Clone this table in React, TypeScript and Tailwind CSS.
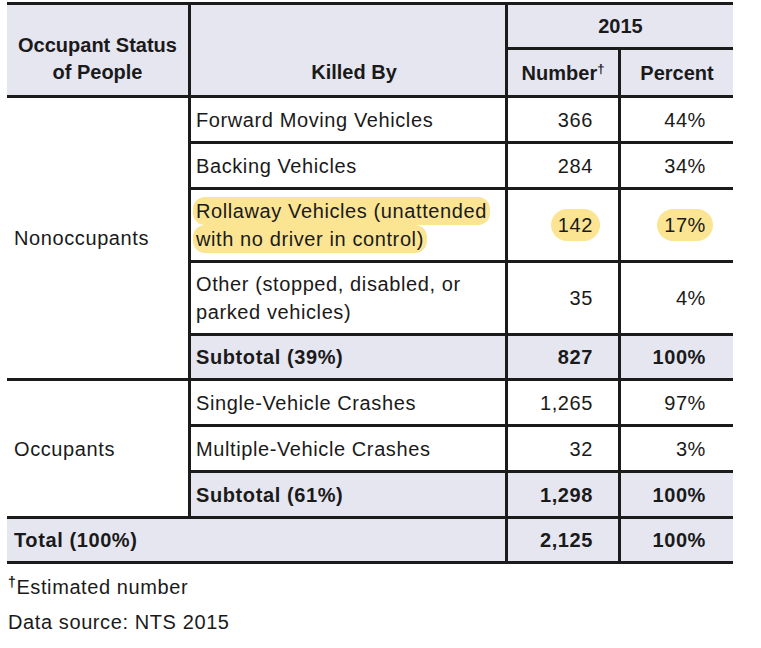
import React from "react";

type Row = {
  label: React.ReactNode;
  number: string;
  percent: string;
  h: string;
  mark?: boolean;
};

const line = "border-[#1b1b1b]";
const lav = "bg-[#e6e6f1]";

const nonoccupants: Row[] = [
  { label: "Forward Moving Vehicles", number: "366", percent: "44%", h: "h-[46px]" },
  { label: "Backing Vehicles", number: "284", percent: "34%", h: "h-[46px]" },
  {
    label: (
      <span className="-ml-[3px] rounded-[12px] bg-[#fbe593] px-[3px] py-[3px] [box-decoration-break:clone]">
        Rollaway Vehicles (unattended
        <br />
        with no driver in control)
      </span>
    ),
    number: "142",
    percent: "17%",
    h: "h-[73px]",
    mark: true,
  },
  {
    label: (
      <>
        Other (stopped, disabled, or
        <br />
        parked vehicles)
      </>
    ),
    number: "35",
    percent: "4%",
    h: "h-[73px]",
  },
];

const occupants: Row[] = [
  { label: "Single-Vehicle Crashes", number: "1,265", percent: "97%", h: "h-[46px]" },
  { label: "Multiple-Vehicle Crashes", number: "32", percent: "3%", h: "h-[46px]" },
];

function Value({ v, mark }: { v: string; mark?: boolean }) {
  return (
    <span className={`rounded-full px-[7px] py-[5px] ${mark ? "bg-[#fbe593]" : ""}`}>
      {v}
    </span>
  );
}

function DataRow({ row, first, groupLabel, span }: { row: Row; first?: boolean; groupLabel?: string; span?: number }) {
  return (
    <tr className={row.h}>
      {first && (
        <td
          rowSpan={span}
          className={`border-b-[3px] border-r-[3px] ${line} pl-[7px] align-middle`}
        >
          {groupLabel}
        </td>
      )}
      <td className={`border-b-[3px] border-r-[3px] ${line} pl-[5px] align-middle leading-[28px]`}>
        {row.label}
      </td>
      <td className={`border-b-[3px] border-r-[3px] ${line} pr-[18px] text-right align-middle`}>
        <Value v={row.number} mark={row.mark} />
      </td>
      <td className={`border-b-[3px] ${line} pr-[20px] text-right align-middle`}>
        <Value v={row.percent} mark={row.mark} />
      </td>
    </tr>
  );
}

function Subtotal({ label, number, h }: { label: string; number: string; h: string }) {
  return (
    <tr className={`${h} font-bold`}>
      <td className={`border-b-[3px] border-r-[3px] ${line} ${lav} pl-[5px] align-middle`}>{label}</td>
      <td className={`border-b-[3px] border-r-[3px] ${line} ${lav} pr-[18px] text-right align-middle`}>
        <Value v={number} />
      </td>
      <td className={`border-b-[3px] ${line} ${lav} pr-[20px] text-right align-middle`}>
        <Value v="100%" />
      </td>
    </tr>
  );
}

export default function App() {
  return (
    <div className="min-h-[648px] w-[761px] bg-white pl-[7px] pt-[2px] font-['Liberation_Sans',Arial,sans-serif] text-[20px] tracking-[0.03em] text-[#1a1a1a]">
      <table className="w-[726px] table-fixed border-separate border-spacing-0">
        <colgroup>
          <col className="w-[184px]" />
          <col className="w-[317px]" />
          <col className="w-[113px]" />
          <col className="w-[112px]" />
        </colgroup>
        <thead className="font-bold tracking-normal">
          <tr className="h-[48px]">
            <th
              rowSpan={2}
              className={`border-y-[3px] border-r-[3px] ${line} ${lav} pb-[9px] text-center align-bottom leading-[27px] font-bold`}
            >
              Occupant Status
              <br />
              of People
            </th>
            <th
              rowSpan={2}
              className={`border-y-[3px] border-r-[3px] ${line} ${lav} pb-[9px] pl-[12px] text-center align-bottom leading-[27px] font-bold`}
            >
              Killed By
            </th>
            <th colSpan={2} className={`border-y-[3px] ${line} ${lav} text-center align-middle font-bold`}>
              2015
            </th>
          </tr>
          <tr className="h-[48px]">
            <th className={`border-b-[3px] border-r-[3px] ${line} ${lav} text-center align-middle font-bold`}>
              Number<sup className="text-[13px]">†</sup>
            </th>
            <th className={`border-b-[3px] ${line} ${lav} text-center align-middle font-bold`}>Percent</th>
          </tr>
        </thead>
        <tbody>
          {nonoccupants.map((r, i) => (
            <DataRow key={i} row={r} first={i === 0} groupLabel="Nonoccupants" span={5} />
          ))}
          <Subtotal label="Subtotal (39%)" number="827" h="h-[45px]" />
          {occupants.map((r, i) => (
            <DataRow key={i} row={r} first={i === 0} groupLabel="Occupants" span={3} />
          ))}
          <Subtotal label="Subtotal (61%)" number="1,298" h="h-[46px]" />
          <tr className="h-[45px] font-bold">
            <td colSpan={2} className={`border-b-[3px] border-r-[3px] ${line} ${lav} pl-[7px] align-middle`}>
              Total (100%)
            </td>
            <td className={`border-b-[3px] border-r-[3px] ${line} ${lav} pr-[18px] text-right align-middle`}>
              <Value v="2,125" />
            </td>
            <td className={`border-b-[3px] ${line} ${lav} pr-[20px] text-right align-middle`}>
              <Value v="100%" />
            </td>
          </tr>
        </tbody>
      </table>
      <div className="pl-px pt-[6px] leading-[35px]">
        <p>
          <sup className="text-[14px] font-bold">†</sup>Estimated number
        </p>
        <p>Data source: NTS 2015</p>
      </div>
    </div>
  );
}
